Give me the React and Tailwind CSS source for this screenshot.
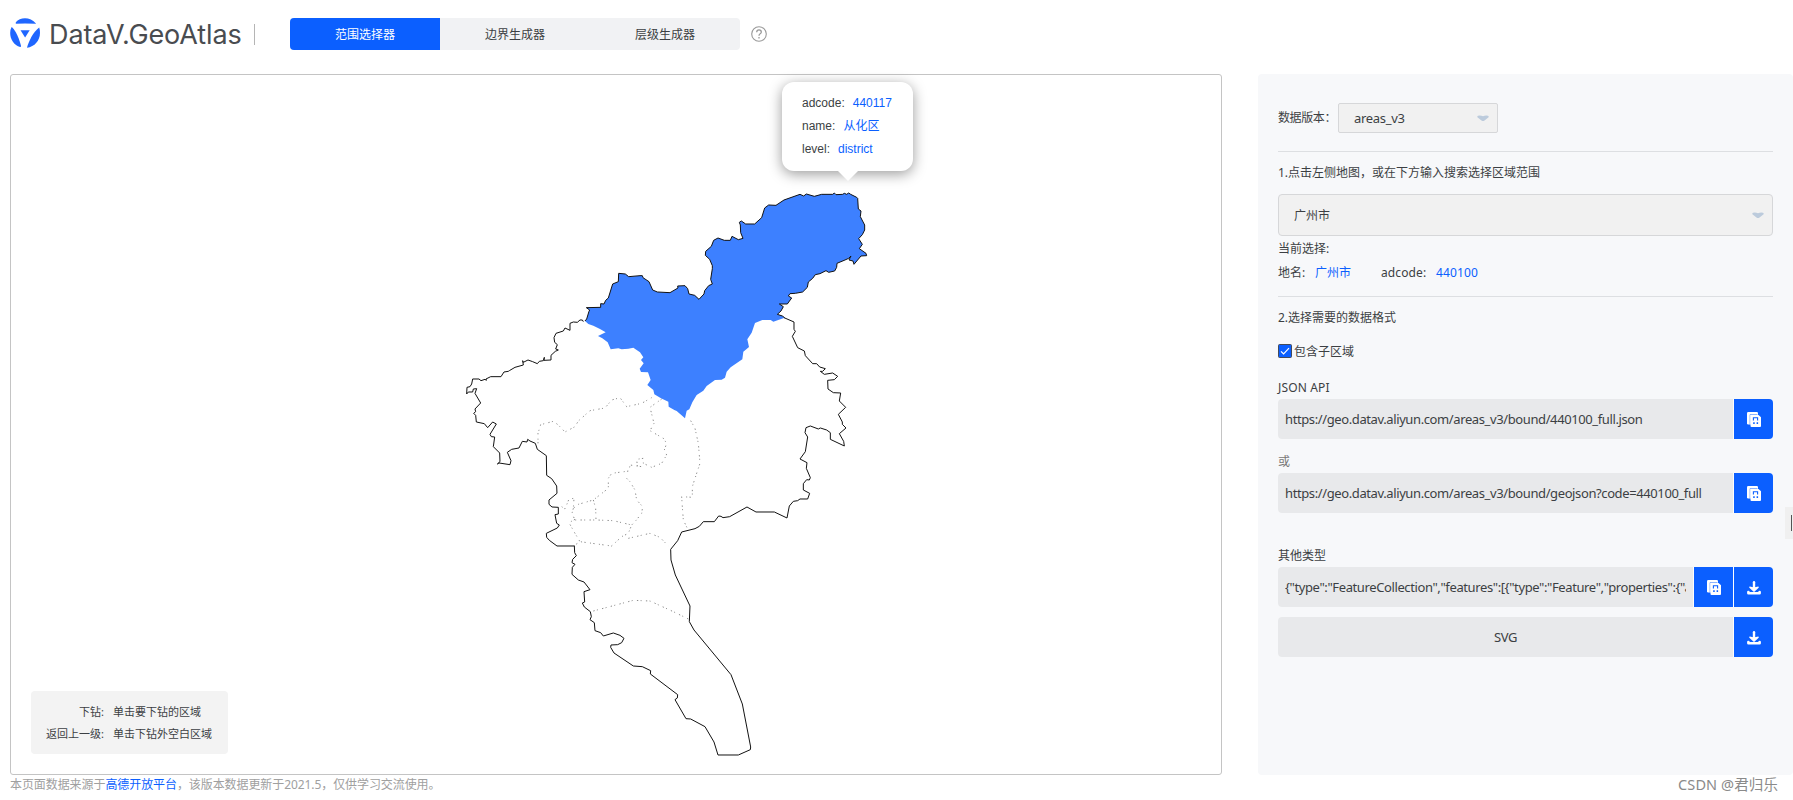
import React from "react";

const DISTRICT_EDGE =
  "M75,453 80,447 87,424 89,420 79,413 122,412 122,401 132,402 137,391 145,384 158,342 175,335 176,310 196,312 206,320 240,317 247,317 249,323 267,335 278,360 292,366 330,368 354,354 353,348 375,347 383,356 387,372 404,376 417,388 432,372 434,362 446,347 457,342 452,328 457,296 457,287 449,268 436,256 437,244 454,229 461,211 474,204 493,211 511,211 516,199 535,209 549,205 542,188 541,165 538,157 544,153 557,162 584,162 605,143 614,114 626,105 648,106 672,90 720,73 731,78 739,72 763,79 785,73 818,73 823,69 828,74 848,73 853,70 860,73 866,69 872,73 890,82 893,85 895,117 903,123 901,140 914,165 914,180 907,194 896,206 907,223 898,236 918,250 920,257 903,258 882,283 879,273 867,270 873,258 866,265 855,270 831,280 830,292 824,303 806,307 798,302 780,311 766,314 758,325 745,336 742,352 728,366 706,370 690,371 685,378 695,384 682,402 658,402 670,410 663,423 652,433 667,438 674,443";
const DISTRICT_REST =
  " 640,455 632,450 607,450 585,459 575,488 562,508 567,531 550,545 547,568 512,592 500,605 495,623 485,629 465,630 440,648 430,662 410,675 397,697 388,718 380,722 375,745 350,723 343,720 326,710 325,695 303,685 283,673 280,660 262,645 272,630 264,607 243,606 239,596 251,580 243,570 250,562 240,547 220,533 205,536 185,538 175,535 152,538 143,517 127,505 114,498 137,487 120,477 100,467 85,462Z";
const WEST_EDGE =
  "M400,65 397,60 390,60 382,67 370,66 360,70 360,91 345,84 340,93 318,100 312,113 314,127 322,134 317,147 325,150 316,154 303,166 303,180 282,181 283,172 280,182 268,184 262,191 248,185 234,180 220,187 218,182 220,195 195,202 178,212 175,214 162,216 153,230 122,230 108,237 109,241 105,238 93,242 87,237 68,237 65,252 60,260 51,262 50,282 55,276 68,276 70,267 80,266 75,280 92,309 75,327 77,335 71,340 77,346 79,366 103,371 113,383 128,366 139,372 120,403 124,410 134,411 130,440 149,459 150,485 142,492 147,489 180,494 183,482 172,457 185,448 207,444 217,424 231,426 233,418 240,423 256,430 262,448 289,467 290,526 305,536 320,558 321,580 297,600 297,613 306,621 325,622 325,642 315,644 320,670 328,675 322,684 289,700 290,712 298,721 321,738 373,738";
const SOUTH_EDGE =
  "M133,77 134,98 139,107 128,118 126,128 135,133 127,142 126,163 145,180 162,186 180,209 162,215 164,246 157,249 163,261 181,275 184,290 180,299 193,308 195,332 212,338 220,348 250,339 270,346 282,355 275,368 263,374 243,375 242,382 252,399 310,438 337,440 362,452 361,462 443,524 442,534 435,539 468,596 482,597 525,620 552,666 564,705 625,705 661,689 662,681 637,552 603,464 492,330 478,305 480,258 436,165 423,120 422,88";
const EAST_EDGE =
  "M402,53 432,66 432,88 436,94 427,109 443,143 463,153 466,167 488,191 500,191 509,201 526,206 518,214 511,214 523,223 548,219 563,229 553,239 533,241 534,267 550,278 572,279 568,303 587,322 565,343 577,366 577,373 588,384 568,401 581,424 583,438 541,418 541,398 530,390 511,384 505,387 481,378 468,383 465,398 473,411 466,455 450,477 471,488 469,505 481,533 478,540 470,539 460,551 460,570 479,580 473,597 450,597 443,602 430,604 418,618 411,654 373,636 318,636 291,621 239,650 219,653 213,649 206,648 193,665 160,665 148,679 135,686 95,696 83,722 62,748";
const INNER_EDGES =
  "M264,430 264,400 272,374 310,364 325,375 345,396 375,380 385,363 420,332 465,324 485,300 510,293 530,320 575,310 605,293" +
  "M635,297 600,322 612,370 600,392 640,415 650,430 643,450 650,465 635,490 605,502 580,490 580,475 560,478 562,497 575,500 540,495 537,513 485,520 475,535 475,565 430,600 385,613 370,625 372,595 357,597 345,627 328,615" +
  "M430,600 437,625 438,660" +
  "M370,625 366,640 375,660 440,660 490,662 545,675 535,700 515,710 485,738 390,725 375,735" +
  "M375,658 357,668 375,700 390,725" +
  "M530,535 540,545 555,570 560,600 578,620 575,640 555,665 545,675" +
  "M535,715 600,700 630,712 655,738" +
  "M722,362 735,385 745,430 750,490 735,535 727,560 727,592 695,590 697,620 700,660 712,685";

function GuangzhouMap() {
  const edge = { fill: "none", stroke: "#111", strokeWidth: 3 };
  const dots = { fill: "none", stroke: "#777", strokeWidth: 2.6, strokeDasharray: "4 7 3 13" };
  return (
    <svg viewBox="11 75 1210 699" className="block h-[699px] w-[1210px]">
      <g transform="translate(450 300) scale(.33333)">
        <path d={INNER_EDGES} {...dots} />
        <path d={WEST_EDGE} {...edge} />
      </g>
      <g transform="translate(530 520) scale(.33333)">
        <path d="M190,273 250,257 310,241 360,243 430,275 475,297" {...dots} />
        <path d={SOUTH_EDGE} {...edge} />
      </g>
      <g transform="translate(650 300) scale(.33333)">
        <path d={EAST_EDGE} {...edge} />
      </g>
      <g transform="translate(560 170) scale(.33333)">
        <path d={DISTRICT_EDGE + DISTRICT_REST} fill="#3d80ff" />
        <path d={DISTRICT_EDGE} {...edge} />
      </g>
    </svg>
  );
}

function Logo() {
  return (
    <svg viewBox="0 0 30 30" className="h-[30px] w-[30px]" fill="#1f66ff">
      <path d="M5.800 4.200C8 1.800 11.200 .3 15 .3S23 2 26.200 5.800Q21 5.400 15 5.400T5.800 5.800Z" />
      <path d="M1.600 9C4 10.500 8 16.500 11 27.800Q11 29.300 10.200 29.100C4 27 .2 21.500 .2 15Q.2 11.500 1.600 9Z" />
      <path d="M29.200 9.600Q30 11.800 30 15C30 22.500 24.500 28.800 17 29.800C18.500 24 23 14 29.200 9.600Z" />
      <path d="M10.500 12.200H19.700L15.100 19.600Z" />
    </svg>
  );
}

function CopyIcon() {
  return (
    <svg viewBox="0 0 14 15" className="h-[15px] w-[14px]">
      <path d="M1.200 0H9.800Q11 0 11 1.200V12.500H1.200Q0 12.500 0 11.300V1.200Q0 0 1.200 0Z" fill="#fff" />
      <path d="M3 12.500V2.500H10.500" fill="none" stroke="#5b93ff" strokeWidth=".7" />
      <path d="M3.500 3H11.500L14 5.200V14Q14 15 13 15H4.500Q3.500 15 3.500 14Z" fill="#fff" />
      <path d="M6.400 8.500V5.800H10.600V8.500" fill="none" stroke="#0b5fff" strokeWidth="1.100" />
      <path d="M6.200 10.300H7.700V12H6.200ZM9.600 10.300H11.100V12H9.600Z" fill="#0b5fff" />
    </svg>
  );
}

function DownloadIcon() {
  return (
    <svg viewBox="0 0 14 14" className="mt-px h-[14px] w-[14px]" fill="none" stroke="#fff">
      <path d="M7 1.300V8" strokeWidth="2.400" strokeLinecap="round" />
      <path d="M2.800 6.200L7 7L11.200 6.200L7 10.200Z" fill="#fff" strokeWidth="1.200" strokeLinejoin="round" />
      <path d="M1.400 11V12.300H12.600V11" strokeWidth="2.600" strokeLinejoin="round" strokeLinecap="round" />
    </svg>
  );
}

function Caret() {
  return (
    <svg viewBox="0 0 12 7" className="h-[7px] w-[12px]" fill="#bccbdc">
      <path d="M1 .8Q3.500 0 6 1.300Q8.500 0 11 .8Q12.300 1.500 11.300 2.600L7.500 5.500Q6 6.600 4.500 5.500L.7 2.600Q-.3 1.500 1 .8Z" />
    </svg>
  );
}

function ActionButton({ children, last }) {
  return (
    <button
      className={
        "ml-px flex h-10 w-[39px] shrink-0 items-center justify-center bg-[#0b5fff] " +
        (last ? "rounded-r" : "")
      }
    >
      {children}
    </button>
  );
}

function Field({ text, children, center }) {
  return (
    <div className="flex h-10 rounded bg-[#fdfdfe]">
      <div
        className={
          "min-w-0 flex-1 rounded-l bg-[#e8e9eb] px-[7px] text-[13px] leading-[41px] tracking-[-0.39px] " +
          (center ? "text-center" : "")
        }
      >
        <div className="overflow-hidden whitespace-nowrap">{text}</div>
      </div>
      {children}
    </div>
  );
}

function TipRow({ label, value }) {
  return (
    <div className="flex h-[23px] items-center gap-[8px]">
      <span>{label}:</span>
      <span className="text-[#0b5fff]">{value}</span>
    </div>
  );
}

export default function App() {
  return (
    <div className="flex h-[800px] w-[1793px] flex-col overflow-hidden bg-white font-['Noto_Sans','Noto_Sans_CJK_SC',sans-serif] text-[12px] text-[#3c3f43]">
      <header className="flex h-[74px] shrink-0 items-start pt-[18px] pl-[10px]">
        <Logo />
        <div className="ml-[9px] h-[32px] w-[196px] whitespace-nowrap font-['Inter',sans-serif] text-[27px] leading-[33px] font-normal tracking-[-0.1px] text-[#494c50]">
          DataV.GeoAtlas
        </div>
        <div className="mt-[6px] ml-[9px] h-[21px] w-px bg-[#b5b5b5]" />
        <nav className="ml-[35px] flex h-8 w-[450px] overflow-hidden rounded bg-[#f1f2f4] text-center leading-[34px]">
          <div className="w-[150px] bg-[#0b5fff] text-white">范围选择器</div>
          <div className="w-[150px]">边界生成器</div>
          <div className="w-[150px]">层级生成器</div>
        </nav>
        <svg viewBox="0 0 16 16" className="mt-[8px] ml-[11px] h-4 w-4" fill="none" stroke="#999">
          <circle cx="8" cy="8" r="7.300" strokeWidth="1.100" />
          <path d="M5.700 6.300Q5.700 3.900 8 3.900T10.300 6.100Q10.300 7.200 9.200 7.800T8 9.700" strokeWidth="1.300" />
          <path d="M8 11V12.400" strokeWidth="1.300" />
        </svg>
      </header>

      <div className="flex h-[701px] shrink-0">
        <main className="relative ml-[10px] w-[1212px] rounded-[3px] border border-[#c4c4c4]">
          <GuangzhouMap />
          <div className="absolute top-[7px] left-[771px] h-[89px] w-[131px] rounded-xl bg-white pt-[9px] pl-5 font-['Liberation_Sans','Noto_Sans_CJK_SC',sans-serif] shadow-[0_3px_14px_rgba(0,0,0,0.4)]">
            <TipRow label="adcode" value="440117" />
            <TipRow label="name" value="从化区" />
            <TipRow label="level" value="district" />
            <svg viewBox="0 0 22 11" className="absolute top-[88px] left-[55px] h-[11px] w-[22px]" fill="#fff">
              <path d="M0 0H22L11 11Z" />
            </svg>
          </div>
          <div className="absolute top-[616px] left-[20px] grid h-[63px] w-[197px] grid-cols-[73px_1fr] content-center gap-x-[9px] rounded bg-[#f3f3f3] text-[11px] leading-[22px] whitespace-nowrap">
            <span className="text-right">下钻:</span>
            <span>单击要下钻的区域</span>
            <span className="text-right">返回上一级:</span>
            <span>单击下钻外空白区域</span>
          </div>
        </main>

        <aside className="relative ml-[36px] flex w-[535px] flex-col rounded-[4px] bg-[#f7f8fa] pr-5 pl-5">
          <div className="mt-[29px] flex h-[30px] items-center">
            <span className="w-[60px] whitespace-nowrap tracking-[-0.4px]">数据版本：</span>
            <div className="flex h-[30px] w-[160px] items-center justify-between rounded-[2px] border border-[#d6d7d9] bg-[#f1f1f1] pr-[8px] pl-[15px] text-[13px]">
              <span className="pt-[2px] tracking-[-0.3px]">areas_v3</span>
              <Caret />
            </div>
          </div>
          <div className="mt-[18px] h-px bg-[#dddfe2]" />
          <div className="mt-[11px] h-5 leading-5">1.点击左侧地图，或在下方输入搜索选择区域范围</div>
          <div className="mt-[11px] flex h-[42px] items-center justify-between rounded border border-[#d6d7d9] bg-[#f1f1f1] pr-[8px] pl-[15px]">
            <span className="pt-[2px]">广州市</span>
            <Caret />
          </div>
          <div className="mt-[3px] h-5 leading-5">当前选择:</div>
          <div className="mt-[4px] flex h-5 leading-5">
            <span className="w-[37px]">地名:</span>
            <span className="w-[66px] text-[#0b5fff]">广州市</span>
            <span className="w-[55px] tracking-[0.1px]">adcode:</span>
            <span className="tracking-[0.15px] text-[#0b5fff]">440100</span>
          </div>
          <div className="mt-[13px] h-px bg-[#dddfe2]" />
          <div className="mt-[11px] h-5 leading-5">2.选择需要的数据格式</div>
          <div className="mt-[13px] flex h-5 items-center gap-[2px]">
            <svg viewBox="0 0 14 14" className="h-[14px] w-[14px] shrink-0">
              <rect x=".5" y=".5" width="13" height="13" rx="1" fill="#0b5fff" stroke="#444b5a" />
              <path d="M3 7.300L5.600 10L11 4.200" fill="none" stroke="#fff" strokeWidth="1.200" />
            </svg>
            <span className="pt-px">包含子区域</span>
          </div>
          <div className="mt-[17px] h-5 leading-5 tracking-[0.15px]">JSON API</div>
          <div className="mt-px">
            <Field text="https://geo.datav.aliyun.com/areas_v3/bound/440100_full.json">
              <ActionButton last><CopyIcon /></ActionButton>
            </Field>
          </div>
          <div className="mt-[13px] h-5 leading-5 text-[#777]">或</div>
          <div className="mt-px">
            <Field text="https://geo.datav.aliyun.com/areas_v3/bound/geojson?code=440100_full">
              <ActionButton last><CopyIcon /></ActionButton>
            </Field>
          </div>
          <div className="mt-[33px] h-5 leading-5">其他类型</div>
          <div className="mt-px">
            <Field text={'{"type":"FeatureCollection","features":[{"type":"Feature","properties":{"adcode":440103'}>
              <ActionButton><CopyIcon /></ActionButton>
              <ActionButton last><DownloadIcon /></ActionButton>
            </Field>
          </div>
          <div className="mt-[10px]">
            <Field text="SVG" center>
              <ActionButton last><DownloadIcon /></ActionButton>
            </Field>
          </div>
          <div className="absolute top-[433px] right-0 flex h-8 w-2 items-center justify-end bg-[#f0f0f0] pr-px">
            <div className="h-4 w-px bg-[#555]" />
          </div>
        </aside>
      </div>

      <footer className="flex h-6 items-start justify-between pr-[15px] pl-[10px] leading-[20px] whitespace-nowrap text-[#a0a0a0]">
        <p className="tracking-[-0.08px]">
          本页面数据来源于<span className="text-[#0b5fff]">高德开放平台</span>，该版本数据更新于2021.5，仅供学习交流使用。
        </p>
        <p className="text-[14.500px] leading-[18px] tracking-[0.1px] text-[#8a8a8a]">CSDN @君归乐</p>
      </footer>
    </div>
  );
}
